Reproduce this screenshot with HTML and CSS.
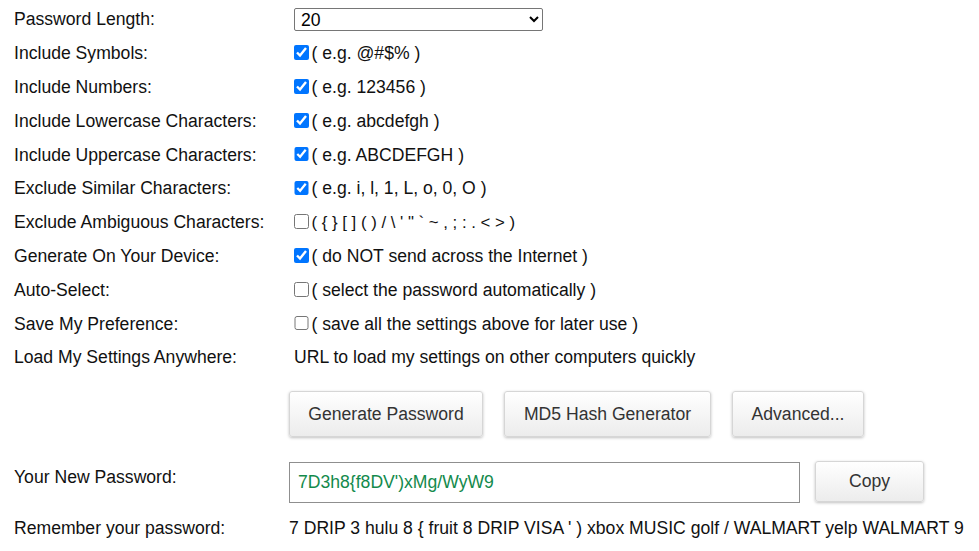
FILE: index.html
```html
<!DOCTYPE html>
<html>
<head>
<meta charset="utf-8">
<link rel="stylesheet" href="styles.css">
</head>
<body>
<div class="form">
  <div class="row"><div class="label">Password Length:</div><div class="field"><select class="len"><option>20</option></select></div></div>
  <div class="row"><div class="label">Include Symbols:</div><div class="field"><input type="checkbox" checked><span>( e.g. @#$% )</span></div></div>
  <div class="row"><div class="label">Include Numbers:</div><div class="field"><input type="checkbox" checked><span>( e.g. 123456 )</span></div></div>
  <div class="row"><div class="label">Include Lowercase Characters:</div><div class="field"><input type="checkbox" checked><span>( e.g. abcdefgh )</span></div></div>
  <div class="row"><div class="label">Include Uppercase Characters:</div><div class="field"><input type="checkbox" checked><span>( e.g. ABCDEFGH )</span></div></div>
  <div class="row"><div class="label">Exclude Similar Characters:</div><div class="field"><input type="checkbox" checked><span>( e.g. i, l, 1, L, o, 0, O )</span></div></div>
  <div class="row"><div class="label">Exclude Ambiguous Characters:</div><div class="field"><input type="checkbox"><span class="amb">( { } [ ] ( ) / \ ' " ` ~ , ; : . &lt; &gt; )</span></div></div>
  <div class="row"><div class="label">Generate On Your Device:</div><div class="field"><input type="checkbox" checked><span>( do NOT send across the Internet )</span></div></div>
  <div class="row"><div class="label">Auto-Select:</div><div class="field"><input type="checkbox"><span>( select the password automatically )</span></div></div>
  <div class="row"><div class="label">Save My Preference:</div><div class="field"><input type="checkbox"><span>( save all the settings above for later use )</span></div></div>
  <div class="row"><div class="label">Load My Settings Anywhere:</div><div class="field"><span class="url">URL to load my settings on other computers quickly</span></div></div>
  <div class="buttons">
    <button class="btn gen">Generate Password</button>
    <button class="btn md5">MD5 Hash Generator</button>
    <button class="btn adv">Advanced...</button>
  </div>
  <div class="pwrow">
    <div class="label pwlabel">Your New Password:</div>
    <div class="pwfield">
      <input class="pw" type="text" value="7D3h8{f8DV')xMg/WyW9">
      <button class="btn copy">Copy</button>
    </div>
  </div>
  <div class="remrow">
    <div class="label">Remember your password:</div>
    <div class="mnemonic">7 DRIP 3 hulu 8 { fruit 8 DRIP VISA ' ) xbox MUSIC golf / WALMART yelp WALMART 9</div>
  </div>
</div>
</body>
</html>
```

FILE: styles.css
```css
html, body {
  margin: 0;
  padding: 0;
  background: #fff;
}
body {
  font-family: "Liberation Sans", Arial, sans-serif;
  font-size: 17.6px;
  color: #111;
  overflow: hidden;
}
.form {
  padding: 3px 0 0 14px;
}
.row {
  display: grid;
  grid-template-columns: 275px 1fr;
  height: 33.8px;
  align-items: center;
}
.label {
  white-space: nowrap;
}
.field {
  display: flex;
  align-items: center;
  white-space: nowrap;
}
.field input[type=checkbox] {
  width: 14.5px;
  height: 14.5px;
  margin: 0 3px 2px 5px;
}
.len {
  margin-left: 5px;
  width: 249px;
  height: 23px;
  font-family: "Liberation Sans", Arial, sans-serif;
  font-size: 17.6px;
  color: #000;
  border: 1px solid #767676;
  border-radius: 2px;
  background: #fff;
  padding: 0 2px;
}
.amb {
  font-size: 16.8px;
}
.url {
  margin-left: 5px;
}
.buttons {
  display: flex;
  gap: 21px;
  margin: 16px 0 0 275px;
}
.btn {
  font-family: "Liberation Sans", Arial, sans-serif;
  font-size: 17.6px;
  color: #333;
  line-height: 20px;
  height: 46px;
  padding: 0;
  border: 1px solid #d6d6d6;
  border-radius: 3px;
  background: linear-gradient(#ffffff, #ececec);
  box-shadow: 0 1px 3px rgba(0,0,0,0.25);
  cursor: pointer;
}
.gen { width: 194px; }
.md5 { width: 207px; }
.adv { width: 132px; }
.pwrow {
  display: grid;
  grid-template-columns: 275px 1fr;
  margin-top: 25px;
  align-items: start;
}
.pwlabel {
  padding-top: 5px;
}
.pwfield {
  display: flex;
  align-items: flex-start;
  gap: 15px;
}
.pw {
  box-sizing: border-box;
  width: 511px;
  height: 41px;
  margin: 0;
  border: 1px solid #8f8f8f;
  border-radius: 0;
  padding: 0 8px;
  font-family: "Liberation Sans", Arial, sans-serif;
  font-size: 17.6px;
  color: #138a4c;
  outline: none;
}
.copy {
  width: 109px;
  height: 41px;
  margin-top: -1px;
}
.remrow {
  display: grid;
  grid-template-columns: 275px 1fr;
  margin-top: 15px;
}
.mnemonic {
  white-space: nowrap;
}
```
